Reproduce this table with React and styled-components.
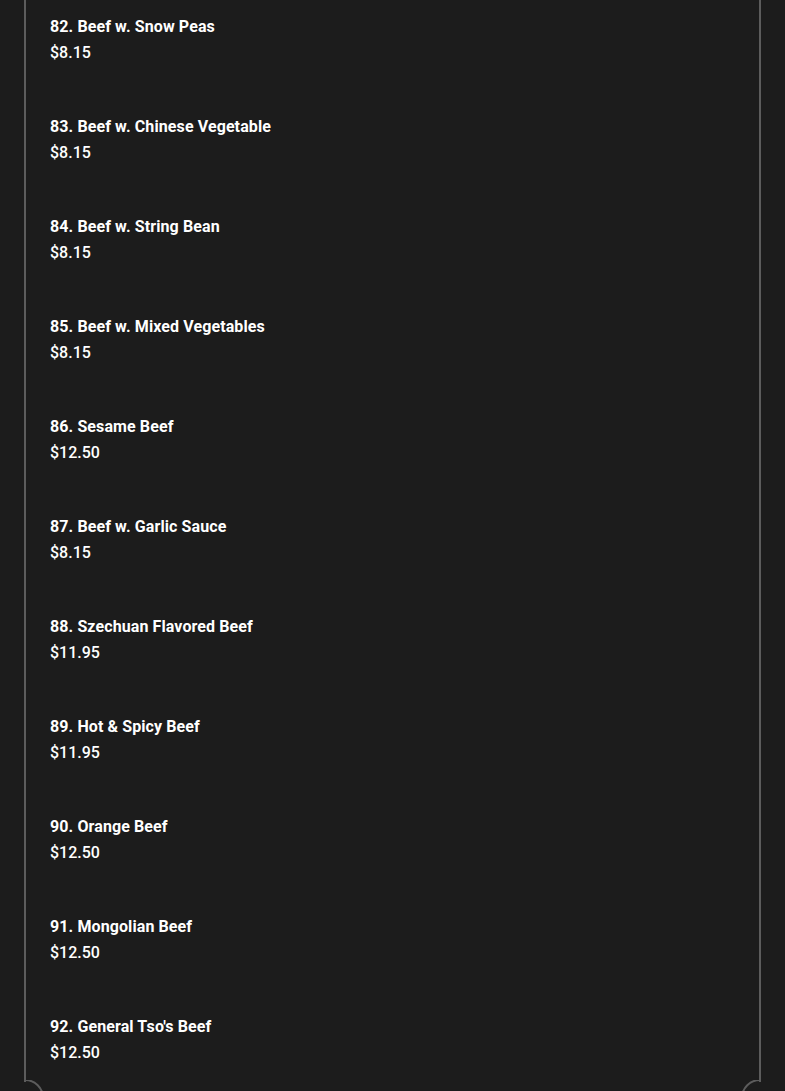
import styled, { createGlobalStyle } from "styled-components";

const items = [
  { no: 82, name: "Beef w. Snow Peas", price: "$8.15" },
  { no: 83, name: "Beef w. Chinese Vegetable", price: "$8.15" },
  { no: 84, name: "Beef w. String Bean", price: "$8.15" },
  { no: 85, name: "Beef w. Mixed Vegetables", price: "$8.15" },
  { no: 86, name: "Sesame Beef", price: "$12.50" },
  { no: 87, name: "Beef w. Garlic Sauce", price: "$8.15" },
  { no: 88, name: "Szechuan Flavored Beef", price: "$11.95" },
  { no: 89, name: "Hot & Spicy Beef", price: "$11.95" },
  { no: 90, name: "Orange Beef", price: "$12.50" },
  { no: 91, name: "Mongolian Beef", price: "$12.50" },
  { no: 92, name: "General Tso's Beef", price: "$12.50" },
];

const GlobalStyle = createGlobalStyle`
  html, body {
    margin: 0;
    padding: 0;
    background: #1c1c1c;
    font-family: Roboto, "Liberation Sans", sans-serif;
    color: #fff;
  }
`;

// concave (scalloped) bottom corners of the menu frame
const Corner = ({ side }) => (
  <CornerSvg side={side} width="20" height="20" viewBox="0 0 20 20">
    <path
      d={side === "left" ? "M1 0 A18 18 0 0 1 19 18" : "M19 0 A18 18 0 0 0 1 18"}
      fill="none"
      stroke="#5c5c5c"
      strokeWidth="2"
    />
  </CornerSvg>
);

const App = () => {
  return (
    <>
      <GlobalStyle />
      <Page>
        <Card>
          <List>
            {items.map((item) => (
              <Item key={item.no}>
                <Title>
                  {item.no}. {item.name}
                </Title>
                <Price>{item.price}</Price>
              </Item>
            ))}
          </List>
          <Corner side="left" />
          <Corner side="right" />
        </Card>
      </Page>
    </>
  );
};

const Page = styled.div`
  padding: 0 24px;
`;

const Card = styled.div`
  position: relative;
  width: 737px;
  box-sizing: border-box;
  padding: 14px 26px 34px;

  &::before,
  &::after {
    content: "";
    position: absolute;
    top: 0;
    bottom: 18px;
    width: 2px;
    background: #5c5c5c;
  }
  &::before {
    left: 0;
  }
  &::after {
    right: 0;
  }
`;

const CornerSvg = styled.svg`
  position: absolute;
  bottom: 0;
  ${(p) => (p.side === "left" ? "left: 0;" : "right: 0;")}
`;

const List = styled.div`
  display: flex;
  flex-direction: column;
  gap: 48px;
`;

const Item = styled.div`
  display: flex;
  flex-direction: column;
`;

const Title = styled.div`
  font-size: 16px;
  font-weight: 700;
  line-height: 26px;
  letter-spacing: 0.1px;
`;

const Price = styled.div`
  font-size: 16px;
  font-weight: 500;
  line-height: 26px;
`;

export default App;
